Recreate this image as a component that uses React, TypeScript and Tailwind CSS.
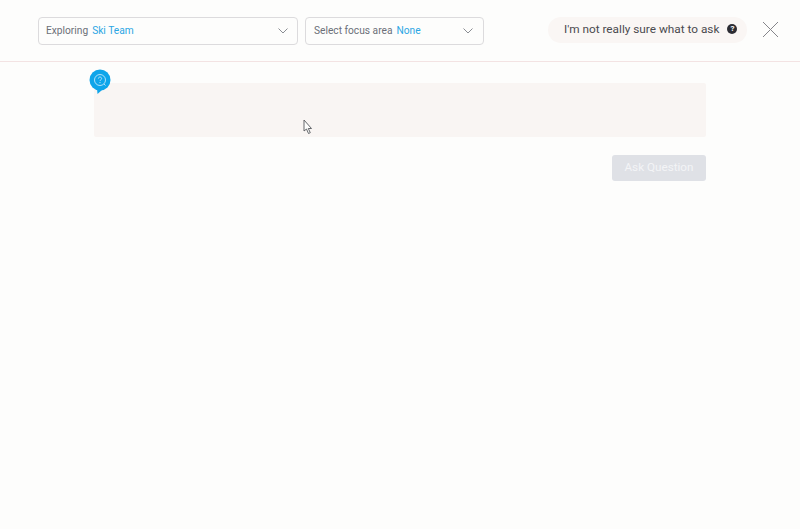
import React from 'react';

const Chevron: React.FC = () => (
  <svg width="10" height="6" viewBox="0 0 10 6" fill="none" className="shrink-0">
    <path d="M.5.5L5 5 9.500.5" stroke="#8a8d93" strokeWidth="1" />
  </svg>
);

const App: React.FC = () => {
  return (
    <div className="h-[529px] w-[800px] overflow-hidden bg-[#fdfdfc] font-['Roboto',sans-serif]">
      {/* cabecera */}
      <div className="flex h-[62px] items-start border-b border-[#f3e3e3] pt-[17px] pl-[38px]">
        <div className="flex h-[28px] w-[260px] items-center justify-between rounded-[4px] border border-[#dcdbdd] pr-[9px] pl-[7px] text-[10.2px]">
          <span>
            <span className="text-[#6b6f78]">Exploring</span>
            <span className="ml-[4px] text-[#2ba6e4]">Ski Team</span>
          </span>
          <Chevron />
        </div>
        <div className="ml-[7px] flex h-[28px] w-[179px] items-center justify-between rounded-[4px] border border-[#dcdbdd] pr-[10px] pl-[8px] text-[10.2px]">
          <span>
            <span className="text-[#6b6f78]">Select focus area</span>
            <span className="ml-[4px] text-[#2ba6e4]">None</span>
          </span>
          <Chevron />
        </div>
        <div className="ml-[64px] flex h-[26px] w-[199px] items-center rounded-full bg-[#faf6f4] pl-[16px] text-[11.8px] text-[#4a4a4f]">
          <span>I'm not really sure what to ask</span>
          <span className="mb-[2px] ml-[8px] flex h-[10px] w-[10px] items-center justify-center rounded-full bg-[#2c2c33] text-[8px] leading-none font-bold text-white">?</span>
        </div>
        <svg width="17" height="17" viewBox="0 0 17 17" fill="none" className="mt-[4px] ml-[15px]">
          <path d="M1 1l15 15M16 1L1 16" stroke="#85858a" strokeWidth="1" />
        </svg>
      </div>

      {/* pregunta */}
      <div className="ml-[94px] w-[612px] pt-[21px]">
        <div className="relative h-[54px] rounded-[2px] bg-[#f9f5f3]">
          <svg width="22" height="26" viewBox="0 0 22 26" fill="none" className="absolute top-[-14px] left-[-5px]">
            <circle cx="11" cy="11" r="10.5" fill="#0ea5ea" />
            <path d="M8 19l5 2-4.500 4z" fill="#0ea5ea" />
            <circle cx="11" cy="11" r="5.500" stroke="#bfe6fa" strokeWidth="0.9" />
            <path d="M15 15l1.500 1.500" stroke="#bfe6fa" strokeWidth="0.9" />
            <path d="M9.400 9.600c0-2.100 3.200-2.100 3.200 0 0 1.200-1.600 1.200-1.600 2.400" stroke="#bfe6fa" strokeWidth="0.9" />
            <circle cx="11" cy="13.600" r="0.6" fill="#bfe6fa" />
          </svg>
          <svg width="11" height="16" viewBox="0 0 11 16" className="absolute top-[36px] left-[209px]">
            <path d="M1 1v11l2.500-2 2 4.500 1.800-.8-2-4.200h3.200z" fill="#fdfdfc" stroke="#55585c" strokeWidth="0.9" />
          </svg>
        </div>
        <div className="mt-[18px] flex justify-end">
          <button type="button" className="h-[26px] w-[94px] rounded-[3px] bg-[#dfe1e6] text-[11.7px] text-[#f3f4f6]">
            Ask Question
          </button>
        </div>
      </div>
    </div>
  );
};

export default App;
